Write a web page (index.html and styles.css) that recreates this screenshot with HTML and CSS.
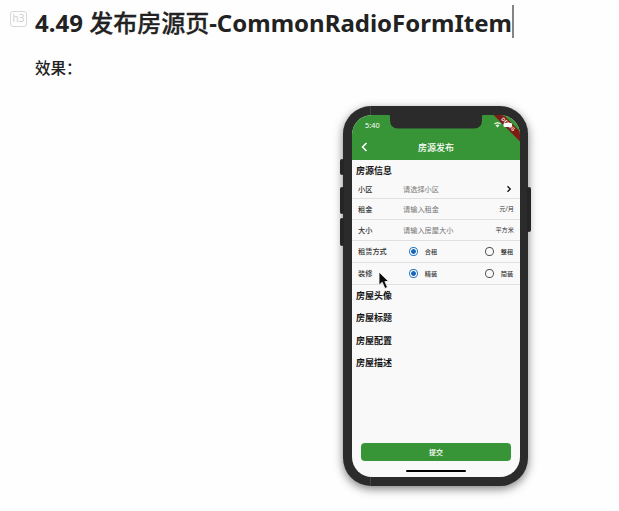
FILE: index.html
```html
<!DOCTYPE html>
<html lang="zh-CN">
<head>
<meta charset="utf-8">
<title>发布房源页</title>
<link rel="stylesheet" href="styles.css">
</head>
<body>
<header class="heading">
  <span class="tag">h3</span>
  <h3 class="title">4.49 <span class="han">发布房源页</span>-CommonRadioFormItem</h3>
  <span class="caret"></span>
</header>
<p class="label">效果：</p>
<main class="phone">
  <span class="key key-mute"></span>
  <span class="key key-up"></span>
  <span class="key key-down"></span>
  <span class="key key-power"></span>
  <span class="seam seam-top"></span>
  <span class="seam seam-bottom"></span>
  <div class="screen">
    <div class="appbar">
      <svg class="notch" width="98" height="15" viewBox="0 0 98 15"><path d="M0 0H98Q95 0 95 3V6Q95 14.500 87 14.500H11Q3 14.500 3 6V3Q3 0 0 0Z" fill="#2b2b2b"/></svg>
      <div class="ribbon">DEBUG</div>
      <div class="status">
        <span class="time">5:40</span>
        <svg width="22" height="8" viewBox="0 0 22 8"><path d="M0 2.700Q3.500-.5 7 2.700L6.200 3.600Q3.500 1.200.8 3.600ZM1.600 4.400Q3.500 2.800 5.400 4.400L3.500 6.500Z" fill="#e4f2e4"/><rect x="9.500" y="2" width="8.500" height="4" rx="1.200" fill="#fff"/></svg>
      </div>
      <div class="nav">
        <svg class="back" width="8" height="10" viewBox="0 0 8 10"><path d="M6.500 1 2.500 5 6.500 9" fill="none" stroke="#fff" stroke-width="1.500"/></svg>
        <span>房源发布</span>
      </div>
    </div>
    <div class="form">
      <h4 class="section first">房源信息</h4>
      <div class="row row-short"><span class="name">小区</span><span class="hint">请选择小区</span><svg class="go" width="6" height="8" viewBox="0 0 6 8"><path d="M1.500 1.200 4.300 4 1.500 6.800" fill="none" stroke="#111" stroke-width="1.300"/></svg></div>
      <div class="row row-rent"><span class="name">租金</span><span class="hint">请输入租金</span><span class="unit">元/月</span></div>
      <div class="row row-size"><span class="name">大小</span><span class="hint">请输入房屋大小</span><span class="unit">平方米</span></div>
      <div class="row"><span class="name">租赁方式</span><span class="radio on"></span><span class="option">合租</span><span class="radio"></span><span class="option last">整租</span></div>
      <div class="row"><span class="name">装修</span><span class="radio on"></span><span class="option">精装</span><span class="radio"></span><span class="option last">简装</span></div>
      <h4 class="section">房屋头像</h4>
      <h4 class="section">房屋标题</h4>
      <h4 class="section">房屋配置</h4>
      <h4 class="section">房屋描述</h4>
    </div>
    <button class="submit">提交</button>
    <div class="home"></div>
  </div>
  <svg class="cursor" width="12" height="20" viewBox="0 0 12 20"><path d="M1 1V14.200L4.200 11.300 6.900 17.500 9.500 16.300 6.900 10.500H10.700Z" fill="#0c0c0c" stroke="#fff" stroke-width=".8"/></svg>
</main>
</body>
</html>
```
FILE: styles.css
```css
* { box-sizing: border-box; }
body {
  margin: 0;
  height: 511px;
  overflow: hidden;
  background: #fefefe;
  color: #222;
  font-family: "Noto Sans", "Noto Sans CJK SC", sans-serif;
}
.heading { display: flex; height: 44px; padding: 5px 0 0 10px; align-items: flex-start; }
.tag {
  width: 17px;
  height: 16px;
  margin: 6px 8px 0 0;
  border: 1px solid #d8d8d8;
  border-radius: 3px;
  color: #d0d0d0;
  font-size: 10px;
  line-height: 13px;
  text-align: center;
}
.title { margin: 0; font-size: 24px; line-height: 36px; font-weight: 700; white-space: nowrap; }
.han { font-weight: 500; font-family: "Noto Sans CJK SC", sans-serif; line-height: 1; -webkit-text-stroke: .3px #222; }
.caret { width: 2px; height: 33px; background: #858585; }
.label { margin: 12px 0 0 35px; height: 24px; font-size: 15.5px; line-height: 24px; font-weight: 500; }
.phone {
  position: relative;
  width: 185px;
  height: 380px;
  margin: 26px 0 0 343px;
  padding: 9px 8px 9px 9px;
  border-radius: 28px;
  background: #2b2b2b;
  box-shadow: 0 3px 10px rgba(0, 0, 0, .5);
}
.key { position: absolute; left: -3px; width: 4px; border-radius: 2px; background: #252525; }
.key-mute { top: 53px; height: 16px; }
.key-up { top: 81px; height: 27px; }
.key-down { top: 112px; height: 28px; }
.key-power { top: 81px; left: 184px; height: 45px; }
.seam { position: absolute; left: 27px; width: 1px; height: 9px; background: #444; }
.seam-top { top: 0; }
.seam-bottom { bottom: 0; }
.screen {
  display: flex;
  flex-direction: column;
  height: 362px;
  border-radius: 20px;
  overflow: hidden;
  background: #f9f9f9;
}
.appbar { position: relative; flex: none; height: 45px; background: #389537; color: #fff; }
.notch { position: absolute; top: -1px; left: 35px; }
.status { position: relative; display: flex; height: 20px; padding: 0 4px 0 13px; align-items: center; justify-content: space-between; }
.time { font-size: 7.3px; letter-spacing: .1px; }
.nav { display: flex; height: 25px; align-items: center; justify-content: center; position: relative; font-size: 9px; font-weight: 500; }
.back { position: absolute; left: 8px; top: 7px; }
.ribbon {
  position: absolute;
  top: 6px;
  right: -13px;
  width: 50px;
  height: 7px;
  transform: rotate(45deg);
  background: #7d1c14;
  color: #f3dcda;
  font-size: 5px;
  font-weight: 700;
  line-height: 7px;
  text-align: center;
}
.form { flex: 1; }
.section { height: 22.3px; margin: 0; padding-left: 4px; font-size: 9px; line-height: 22px; font-weight: 700; color: #151515; }
.section.first { height: 21px; }
.row { display: flex; height: 22px; padding: 0 6px 1px; align-items: center; border-bottom: 1px solid #e0e0e0; font-size: 7.2px; color: #333; }
.row-short { height: 18px; }
.row-rent { height: 21px; }
.row-size { height: 21px; }
.name { width: 45px; font-weight: 500; }
.hint { color: #777; }
.unit { margin-left: auto; font-size: 6.2px; }
.go { margin-left: auto; margin-right: 2px; }
.radio { width: 9px; height: 9px; margin-left: 6px; border: 1px solid #555; border-radius: 50%; }
.on { margin-left: 9px; border-color: #2b79c6; background: radial-gradient(circle, #1467bd 0 2px, #f9f9f9 2.700px); }
.option { width: 58px; margin-left: 7px; font-size: 6.2px; font-weight: 500; }
.option.last { width: 14px; }
.submit {
  flex: none;
  height: 18px;
  margin: 0 9px 9px;
  padding: 0;
  border: 0;
  border-radius: 4px;
  background: #389537;
  color: #fff;
  font: 500 7px/18px "Noto Sans CJK SC", sans-serif;
}
.home { flex: none; width: 60px; height: 2px; margin: 0 auto 5px; border-radius: 1px; background: #000; }
.cursor { position: absolute; left: 35px; top: 165px; }
```
